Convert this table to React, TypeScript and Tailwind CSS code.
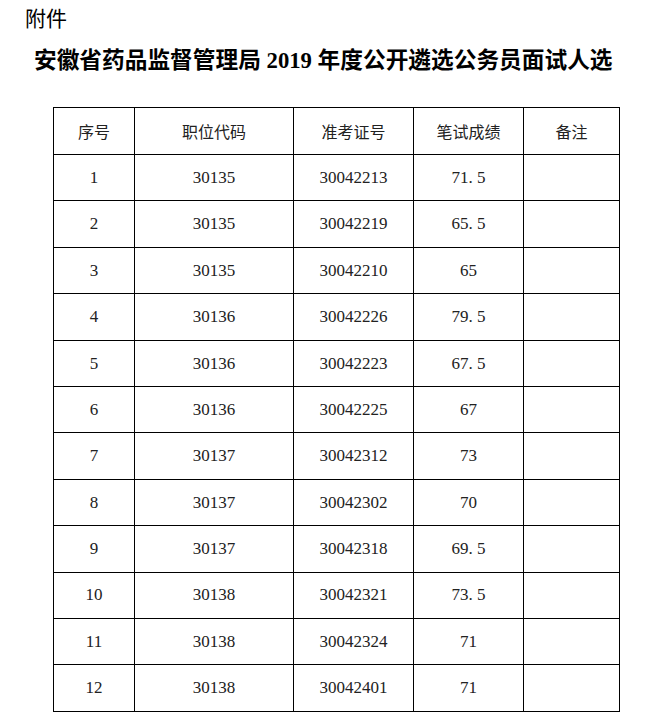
const rows: [string, string, string, string][] = [
  ["1", "30135", "30042213", "71.5"],
  ["2", "30135", "30042219", "65.5"],
  ["3", "30135", "30042210", "65"],
  ["4", "30136", "30042226", "79.5"],
  ["5", "30136", "30042223", "67.5"],
  ["6", "30136", "30042225", "67"],
  ["7", "30137", "30042312", "73"],
  ["8", "30137", "30042302", "70"],
  ["9", "30137", "30042318", "69.5"],
  ["10", "30138", "30042321", "73.5"],
  ["11", "30138", "30042324", "71"],
  ["12", "30138", "30042401", "71"],
];

const headers = ["序号", "职位代码", "准考证号", "笔试成绩", "备注"];

function Score({ value }: { value: string }) {
  const [a, b] = value.split(".");
  if (b === undefined) return <>{a}</>;
  return (
    <>
      {a}
      <span className="inline-block w-[8.5px] text-left">.</span>
      {b}
    </>
  );
}

export default function App() {
  return (
    <div className="min-h-screen w-[665px] bg-white text-black">
      <div className="pl-[25px] pt-[4px] text-[21px] leading-[26px] font-['Noto_Sans_CJK_SC',sans-serif]">
        附件
      </div>
      <h1 className="mt-[16px] pl-[34px] whitespace-nowrap text-[22.7px] leading-[30px] font-bold font-['Liberation_Serif','Noto_Sans_CJK_SC',serif]">
        安徽省药品监督管理局 2019 年度公开遴选公务员面试人选
      </h1>
      <table className="mt-[31px] ml-[53px] w-[566px] table-fixed border-collapse text-[17px] font-['Liberation_Serif','Noto_Sans_CJK_SC',serif] text-[#222]">
        <colgroup>
          <col className="w-[81px]" />
          <col className="w-[159px]" />
          <col className="w-[120px]" />
          <col className="w-[110px]" />
          <col className="w-[96px]" />
        </colgroup>
        <thead>
          <tr className="h-[47px]">
            {headers.map((h) => (
              <th
                key={h}
                className="border border-black p-0 text-center align-middle font-normal text-[16px] font-['Noto_Sans_CJK_SC',sans-serif]"
              >
                {h}
              </th>
            ))}
          </tr>
        </thead>
        <tbody>
          {rows.map((r) => (
            <tr key={r[0]} className="h-[46.4px]">
              <td className="border border-black p-0 text-center align-middle">{r[0]}</td>
              <td className="border border-black p-0 text-center align-middle">{r[1]}</td>
              <td className="border border-black p-0 text-center align-middle">{r[2]}</td>
              <td className="border border-black p-0 text-center align-middle">
                <Score value={r[3]} />
              </td>
              <td className="border border-black p-0"></td>
            </tr>
          ))}
        </tbody>
      </table>
    </div>
  );
}
